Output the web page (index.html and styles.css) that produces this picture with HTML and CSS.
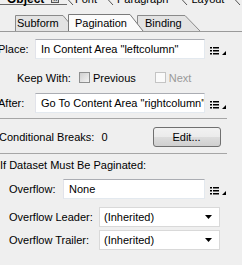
FILE: index.html
```html
<!DOCTYPE html>
<html>
<head>
<meta charset="utf-8">
<link rel="stylesheet" href="styles.css">
</head>
<body>
<div class="page">
  <div class="topstrip">
    <div class="ttab ttab-obj"><span class="bold">Object</span><span class="xbox">x</span></div>
    <svg class="diag" width="7" height="6" viewBox="0 0 7 6"><path d="M0.5 0 L6 6" stroke="#555" fill="none"/></svg>
    <div class="ttab ttab-font">Font</div>
    <svg class="diag diag-2" width="7" height="6" viewBox="0 0 7 6"><path d="M0.5 0 L6 6" stroke="#555" fill="none"/></svg>
    <div class="ttab ttab-para">Paragraph</div>
    <svg class="diag diag-3" width="7" height="6" viewBox="0 0 7 6"><path d="M0.5 0 L6 6" stroke="#555" fill="none"/></svg>
    <div class="ttab ttab-lay">Layout</div>
    <svg class="diag diag-4" width="7" height="6" viewBox="0 0 7 6"><path d="M0.5 0 L6 6" stroke="#555" fill="none"/></svg>
  </div>
  <div class="tabs">
    <div class="tab tab-sub">
      <svg class="tabshape" viewBox="0 0 62 16" preserveAspectRatio="none"><path d="M0.5 16 V0.5 H48 L61 16" fill="#e3e3e3" stroke="#8a8a8a"/></svg>
      <span class="tablabel">Subform</span>
    </div>
    <div class="tab tab-pag">
      <svg class="tabshape" viewBox="0 0 76 17" preserveAspectRatio="none"><path d="M0.5 17 V0.5 H62 L75 17" fill="#fbfbfb" stroke="#7a7a7a"/></svg>
      <span class="tablabel">Pagination</span>
    </div>
    <div class="tab tab-bind">
      <svg class="tabshape" viewBox="0 0 64 16" preserveAspectRatio="none"><path d="M0.5 16 V0.5 H48 L63 16" fill="#e3e3e3" stroke="#8a8a8a"/></svg>
      <span class="tablabel">Binding</span>
    </div>
  </div>
  <div class="panel">
    <div class="row row-place">
      <span class="label label-place">Place:</span>
      <div class="field field-wide">In Content Area "leftcolumn"</div>
      <svg class="listicon" width="17" height="8" viewBox="0 0 17 8"><g fill="#000"><rect x="0" y="0" width="2" height="1.5"/><rect x="3" y="0" width="6" height="1.5"/><rect x="0" y="3" width="2" height="1.5"/><rect x="3" y="3" width="6" height="1.5"/><rect x="0" y="6" width="2" height="1.5"/><rect x="3" y="6" width="6" height="1.5"/><path d="M16 4 V8 H12 Z"/></g></svg>
    </div>
    <div class="row row-keep">
      <span class="label label-keep">Keep With:</span>
      <span class="check"></span><span class="cbtext">Previous</span>
      <span class="check check-dis"></span><span class="cbtext cbtext-dis">Next</span>
    </div>
    <div class="row row-after">
      <span class="label label-place">After:</span>
      <div class="field field-wide">Go To Content Area "rightcolumn"</div>
      <svg class="listicon" width="17" height="8" viewBox="0 0 17 8"><g fill="#000"><rect x="0" y="0" width="2" height="1.5"/><rect x="3" y="0" width="6" height="1.5"/><rect x="0" y="3" width="2" height="1.5"/><rect x="3" y="3" width="6" height="1.5"/><rect x="0" y="6" width="2" height="1.5"/><rect x="3" y="6" width="6" height="1.5"/><path d="M16 4 V8 H12 Z"/></g></svg>
    </div>
    <div class="sep"></div>
    <div class="row row-cond">
      <span class="label label-cond">Conditional Breaks:</span>
      <span class="count">0</span>
      <button class="btn">Edit...</button>
    </div>
    <div class="sep sep2"></div>
    <div class="heading">If Dataset Must Be Paginated:</div>
    <div class="row row-over">
      <span class="label label-over">Overflow:</span>
      <div class="field field-over">None</div>
      <svg class="listicon" width="17" height="8" viewBox="0 0 17 8"><g fill="#000"><rect x="0" y="0" width="2" height="1.5"/><rect x="3" y="0" width="6" height="1.5"/><rect x="0" y="3" width="2" height="1.5"/><rect x="3" y="3" width="6" height="1.5"/><rect x="0" y="6" width="2" height="1.5"/><rect x="3" y="6" width="6" height="1.5"/><path d="M16 4 V8 H12 Z"/></g></svg>
    </div>
    <div class="row row-sel">
      <span class="label label-sel">Overflow Leader:</span>
      <div class="select"><span>(Inherited)</span><svg width="8" height="4" viewBox="0 0 8 4"><path d="M0 0 H7 L3.5 4 Z" fill="#000"/></svg></div>
    </div>
    <div class="row row-sel row-sel2">
      <span class="label label-sel">Overflow Trailer:</span>
      <div class="select"><span>(Inherited)</span><svg width="8" height="4" viewBox="0 0 8 4"><path d="M0 0 H7 L3.5 4 Z" fill="#000"/></svg></div>
    </div>
  </div>
</div>
</body>
</html>
```

FILE: styles.css
```css
html, body {
  margin: 0;
  padding: 0;
}
body {
  background: #efefef;
  font-family: "Liberation Sans", Arial, sans-serif;
  font-size: 11px;
  color: #000;
  width: 242px;
  height: 265px;
  overflow: hidden;
}
.page {
  width: 242px;
  height: 265px;
  overflow: hidden;
}
.topstrip {
  height: 7px;
  overflow: hidden;
  display: flex;
  align-items: flex-start;
}
.ttab {
  line-height: 13px;
  margin-top: -7px;
  white-space: nowrap;
}
.bold { font-weight: bold; font-size: 12px; }
.ttab-obj {
  padding-left: 7px;
  width: 60px;
  display: flex;
  gap: 7px;
  height: 11px;
  border-bottom: 1px solid #6a6a6a;
  flex: none;
}
.xbox {
  display: inline-block;
  box-sizing: border-box;
  width: 8px;
  height: 9px;
  border: 1px solid #555;
  background: #d8d8d8;
  font-size: 7px;
  line-height: 7px;
  text-align: center;
  margin-top: 1px;
}
.diag { flex: none; margin-top: -1px; }
.ttab-font { margin-left: 1px; }
.diag-2 { margin-left: 10px; }
.ttab-para { margin-left: 3px; }
.diag-3 { margin-left: 13px; }
.ttab-lay { margin-left: 3px; }
.diag-4 { margin-left: 10px; }
.tabs {
  margin-top: 7px;
  height: 17px;
  display: flex;
  align-items: flex-end;
  padding-left: 15px;
  border-bottom: 1px solid #9a9a9a;
}
.tab {
  position: relative;
  display: flex;
  align-items: center;
}
.tabshape {
  position: absolute;
  left: 0;
  top: 0;
  width: 100%;
  height: 100%;
}
.tablabel {
  position: relative;
}
.tab-sub { width: 62px; height: 16px; }
.tab-sub .tablabel { margin-left: 2px; }
.tab-pag { width: 76px; height: 17px; margin-left: -9px; z-index: 2; }
.tab-pag .tablabel { margin-left: 7px; }
.tab-bind { width: 64px; height: 16px; margin-left: -7px; z-index: 1; }
.tab-bind .tablabel { margin-left: 8px; }
.panel {
  display: flex;
  flex-direction: column;
}
.row {
  display: flex;
  align-items: center;
}
.label { white-space: nowrap; }
.row-place { margin-top: 7px; }
.label-place { width: 35px; margin-left: -2px; flex: none; }
.field {
  box-sizing: border-box;
  height: 20px;
  background: #fff;
  border: 1px solid;
  border-color: #abadb3 #e3e9ef #e3e9ef #e2e3ea;
  padding-left: 5px;
  line-height: 18px;
  white-space: nowrap;
  overflow: hidden;
}
.field-wide { width: 170px; margin-left: 2px; }
.listicon { margin-left: 5px; margin-top: 4px; flex: none; }
.row-keep { margin-top: 13px; height: 11px; }
.label-keep { margin-left: 17px; width: 62px; }
.check {
  box-sizing: border-box;
  width: 11px;
  height: 11px;
  border: 1px solid #8e8f8f;
  background: linear-gradient(135deg, #cfcfcf, #f4f4f4);
  flex: none;
}
.check-dis {
  margin-left: 19px;
  border-color: #c4c4c4;
  background: #fafafa;
}
.cbtext { margin-left: 3px; }
.cbtext-dis { color: #9a9a9a; }
.row-after { margin-top: 10px; }
.sep {
  height: 1px;
  width: 227px;
  background: #a6a6a6;
  margin-top: 5px;
}
.row-cond { margin-top: 8px; height: 20px; }
.label-cond { margin-left: -1px; }
.count { margin-left: 7px; }
.btn {
  box-sizing: border-box;
  margin: 0 0 0 45px;
  width: 68px;
  height: 20px;
  border: 1px solid #707070;
  border-radius: 3px;
  background: linear-gradient(#f2f2f2 0%, #ebebeb 50%, #dddddd 51%, #cfcfcf 100%);
  font-family: "Liberation Sans", Arial, sans-serif;
  font-size: 11px;
  padding: 0;
  color: #000;
}
.sep2 { margin-top: 6px; }
.heading { margin-top: 5px; line-height: 12px; }
.row-over { margin-top: 8px; }
.label-over { margin-left: 9px; width: 54px; }
.field-over { width: 142px; }
.row-sel { margin-top: 8px; }
.row-sel2 { margin-top: 3px; }
.label-sel { margin-left: 9px; width: 90px; }
.select {
  box-sizing: border-box;
  width: 121px;
  height: 20px;
  background: #fff;
  border: 1px solid #d9d9d9;
  display: flex;
  align-items: center;
  justify-content: space-between;
  padding: 0 6px 0 4px;
}
```
